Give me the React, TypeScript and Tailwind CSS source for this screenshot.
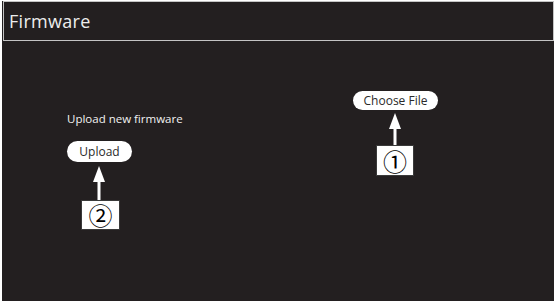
import React from "react";

function Arrow({ x, top, bottom }: { x: number; top: number; bottom: number }) {
  const h = bottom - top;
  return (
    <svg className="absolute" style={{ left: x - 8, top }} width={16} height={h} viewBox={`0 0 16 ${h}`}>
      <polygon points="8,0 14,16 2,16" fill="#ffffff" />
      <rect x={6.5} y={14} width={3} height={h - 14} fill="#ffffff" />
    </svg>
  );
}

function NumBox({ num, className }: { num: string; className: string }) {
  return (
    <div className={`absolute flex items-center justify-center bg-white border border-[#3a3a3a] text-black ${className}`}>
      <span
        className="text-[24px] leading-none"
        style={{ fontFamily: '"Noto Sans CJK JP", "Noto Sans CJK SC", sans-serif' }}
      >
        {num}
      </span>
    </div>
  );
}

export default function App() {
  return (
    <div
      className="w-[556px] h-[301px] bg-white pl-[2px] pr-[2px] pt-[1px] overflow-hidden"
      style={{ fontFamily: '"Open Sans", "Liberation Sans", sans-serif' }}
    >
      <div className="relative h-full bg-[#231f20] flex flex-col">
        {/* Header */}
        <div className="ml-[1px] h-[40px] border border-[#c4c4c4] flex items-center pl-[5px]">
          <span className="text-[18px] text-[#ededed] tracking-[0.3px]">Firmware</span>
        </div>

        {/* Body */}
        <div className="flex flex-1">
          <div className="w-[351px] pl-[65px] pt-[71px] flex flex-col items-start">
            <p className="text-[11.5px] leading-[14px] text-[#f2f2f2]">Upload new firmware</p>
            <button className="mt-[15px] w-[65px] h-[21px] rounded-full bg-white text-[12px] text-[#2a2a2a] flex items-center justify-center">
              Upload
            </button>
          </div>
          <div className="pt-[50px]">
            <button className="w-[85px] h-[19px] rounded-full bg-white text-[12px] text-[#2a2a2a] flex items-center justify-center">
              Choose File
            </button>
          </div>
        </div>

        {/* Callouts */}
        <Arrow x={393} top={112} bottom={145} />
        <NumBox num="①" className="left-[374px] top-[144px] w-[38px] h-[31px]" />
        <Arrow x={97} top={165} bottom={200} />
        <NumBox num="②" className="left-[79px] top-[199px] w-[39px] h-[30px]" />
      </div>
    </div>
  );
}
